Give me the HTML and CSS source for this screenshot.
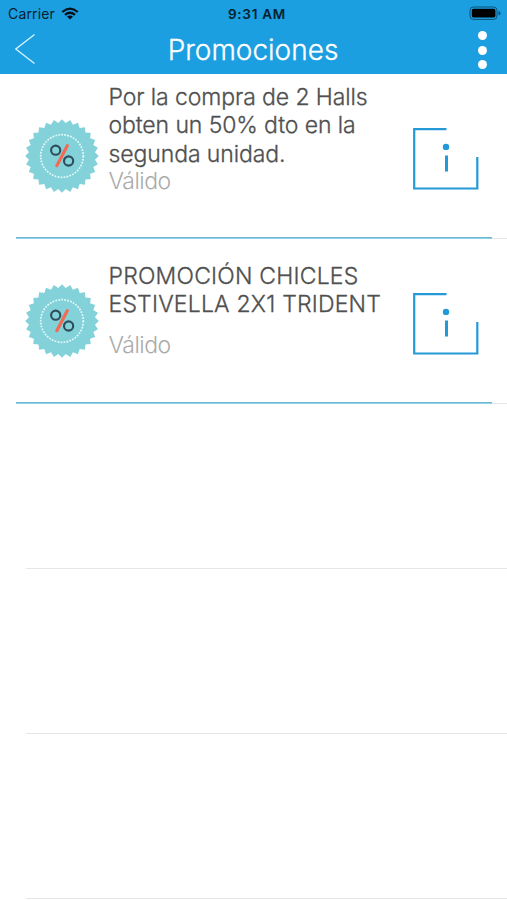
FILE: index.html
```html
<!DOCTYPE html>
<html lang="es">
<head>
  <meta charset="UTF-8">
  <title>Promociones</title>
  <link rel="stylesheet" href="styles.css">
</head>
<body>
  <svg class="defs" width="0" height="0">
    <symbol id="seal" viewBox="-37 -37 74 74">
      <polygon class="seal-shape" points="" />
      <circle class="seal-ring" r="21.3" />
      <circle class="percent-dot" cx="-6.3" cy="-5.8" r="4.6" />
      <circle class="percent-dot" cx="6.6" cy="5" r="4.6" />
      <path class="percent-bar" d="M5.3-10.3L-5.2 9.7" />
    </symbol>
    <symbol id="info" viewBox="0 0 66 62">
      <path class="info-line" d="M33.5 1.2H1.2V60.5H64.3V29" />
      <path class="info-line info-stem" d="M33.5 27.5V43.5" />
      <circle class="info-dot" cx="33" cy="18.9" r="3.2" />
    </symbol>
  </svg>

  <header class="header">
    <div class="status-bar">
      <div class="carrier">
        <span>Carrier</span>
        <svg class="wifi" width="18" height="13" viewBox="0 0 18 13">
          <path d="M1.3 5Q9-1.8 16.7 5M4 7.9Q9 3.6 14 7.9" />
          <path class="wifi-base" d="M9 12.4L6 9.5Q9 7.3 12 9.5Z" />
        </svg>
      </div>
      <div class="time">9:31 AM</div>
      <svg class="battery" width="33" height="15" viewBox="0 0 33 15">
        <rect class="battery-case" x="1" y="1" width="27" height="12.4" rx="3.5" />
        <rect x="2.8" y="2.8" width="23.6" height="8.8" rx="1.8" />
        <path class="battery-tip" d="M29.5 5Q31.5 5.5 31.5 7.2T29.5 9.4Z" />
      </svg>
    </div>
    <div class="nav-bar">
      <svg class="back" width="20" height="30" viewBox="0 0 20 30">
        <path d="M19.5.5L.8 15L19.5 29.5" />
      </svg>
      <h1 class="title">Promociones</h1>
      <div class="menu"><i></i><i></i><i></i></div>
    </div>
  </header>

  <ul class="list">
    <li class="row promo">
      <svg class="seal"><use href="#seal" /></svg>
      <div class="text">
        <p class="name">Por la compra de 2 Halls<br>obten un 50% dto en la<br>segunda unidad.</p>
        <p class="valid">Válido</p>
      </div>
      <svg class="info"><use href="#info" /></svg>
    </li>
    <li class="row promo short">
      <svg class="seal"><use href="#seal" /></svg>
      <div class="text">
        <p class="name">PROMOCIÓN CHICLES<br>ESTIVELLA 2X1 TRIDENT</p>
        <p class="valid">Válido</p>
      </div>
      <svg class="info"><use href="#info" /></svg>
    </li>
    <li class="row"></li>
    <li class="row"></li>
    <li class="row"></li>
  </ul>

  <script>
    // outline of the seal: outer and inner points in turn
    const teeth = 28;
    const points = [];
    for (let i = 0; i < teeth * 2; i++) {
      const r = i % 2 ? 33.2 : 36.8;
      const a = Math.PI * i / teeth - Math.PI / 2;
      points.push((r * Math.cos(a)).toFixed(2) + "," + (r * Math.sin(a)).toFixed(2));
    }
    document.querySelector(".seal-shape").setAttribute("points", points.join(" "));
  </script>
</body>
</html>
```

FILE: styles.css
```css
* {
  box-sizing: border-box;
  margin: 0;
  padding: 0;
}

body {
  font-family: Inter, "Liberation Sans", sans-serif;
  background-color: #fff;
  height: 900px;
  overflow: hidden;
}

.defs {
  display: block;
}

.header {
  height: 74px;
  background-color: #1b9fe0;
}

.status-bar {
  display: grid;
  grid-template-columns: 1fr auto 1fr;
  align-items: center;
  height: 27px;
  padding: 0 5px 0 8px;
  font-size: 14px;
  color: #06202e;
}

.carrier {
  display: flex;
  align-items: center;
  gap: 6px;
  letter-spacing: 0.15px;
}

.wifi path {
  fill: none;
  stroke: #06121a;
  stroke-width: 2.2;
}

.wifi .wifi-base {
  fill: #06121a;
  stroke: none;
}

.time {
  font-size: 13.5px;
  font-weight: 600;
  letter-spacing: 0.75px;
  padding-left: 4px;
}

.battery {
  justify-self: end;
}

.battery-case {
  fill: none;
  stroke: #0d5275;
  stroke-width: 1;
}

.battery-tip {
  fill: #0d5275;
}

.nav-bar {
  display: grid;
  grid-template-columns: 1fr auto 1fr;
  align-items: center;
  height: 47px;
  padding: 0 20px 0 15px;
}

.back {
  margin-bottom: 3px;
}

.back path {
  fill: none;
  stroke: #d8f1ff;
  stroke-width: 1.3;
}

.title {
  padding-left: 4px;
  font-size: 28px;
  font-weight: 300;
  line-height: 47px;
  color: #fff;
  -webkit-text-stroke: 0.3px;
}

.menu {
  justify-self: end;
  display: flex;
  flex-direction: column;
  gap: 5.2px;
  margin-bottom: 1px;
}

.menu i {
  width: 9px;
  height: 9px;
  border-radius: 50%;
  background-color: #fff;
}

.list {
  list-style: none;
}

.row {
  height: 165px;
  background: linear-gradient(#e6e6e8, #e6e6e8) 26px 100% / 100% 1px no-repeat;
}

.promo {
  display: flex;
  align-items: flex-start;
  padding: 9px 28px 0 25px;
  background-image: linear-gradient(#6db7d3 50%, #8fd0e8 50%), linear-gradient(#e6e6e8, #e6e6e8);
  background-position: 16px 163px, 26px 164px;
  background-size: 476px 2px, 100% 1px;
}

.seal {
  width: 74px;
  height: 74px;
  margin-top: 36px;
}

.seal-shape {
  fill: #83d2da;
}

.seal-ring {
  fill: none;
  stroke: #e8fafa;
  stroke-width: 1.7;
  stroke-dasharray: 1.7 1.3;
}

.percent-dot {
  fill: none;
  stroke: #2f4d5a;
  stroke-width: 2.1;
}

.percent-bar {
  stroke: #f36b52;
  stroke-width: 3.2;
  stroke-linecap: round;
}

.text {
  flex: 1;
  padding-left: 9.5px;
  white-space: nowrap;
}

.name {
  font-size: 23px;
  font-weight: 300;
  line-height: 28.3px;
  letter-spacing: -0.1px;
  color: #505050;
  -webkit-text-stroke: 0.3px;
}

.valid {
  font-size: 23px;
  font-weight: 300;
  line-height: 27px;
  letter-spacing: -0.5px;
  color: #ababab;
}

.short .text {
  padding-top: 14px;
}

.short .name {
  letter-spacing: 0.2px;
}

.short .valid {
  margin-top: 13.5px;
}

.info {
  width: 66px;
  height: 62px;
  margin-top: 45px;
}

.info-line {
  fill: none;
  stroke: #2499d6;
  stroke-width: 2.2;
}

.info-stem {
  stroke-width: 3;
}

.info-dot {
  fill: #2499d6;
}
```
